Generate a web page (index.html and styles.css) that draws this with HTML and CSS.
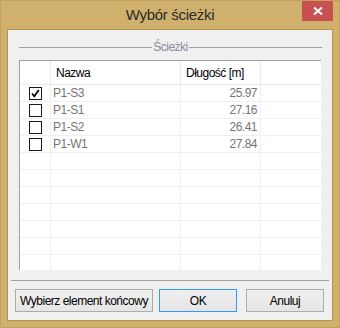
FILE: index.html
```html
<!DOCTYPE html>
<html>
<head>
  <meta charset="utf-8">
  <link rel="stylesheet" href="styles.css">
</head>
<body>
  <div class="window">
    <div class="titlebar">
      <span></span>
      <div class="title">Wybór ścieżki</div>
      <div class="controls">
        <div class="close">
          <svg width="10" height="8" viewBox="0 0 10 8"><path d="M1 0.5 L9 7.5 M9 0.5 L1 7.5" stroke="#fff" stroke-width="2"/></svg>
        </div>
      </div>
    </div>

    <div class="client">
      <div class="group-head">
        <span class="rule"></span>
        <span class="group-label">Ścieżki</span>
        <span class="rule"></span>
      </div>

      <div class="grid">
        <div class="row head">
          <div class="cell"></div>
          <div class="cell">Nazwa</div>
          <div class="cell">Długość [m]</div>
          <div class="cell"></div>
        </div>
        <div class="row">
          <div class="cell"><span class="check checked"><svg width="11" height="11" viewBox="0 0 11 11"><path d="M2 5.5 L4.3 8.3 L8.8 2" fill="none" stroke="#000" stroke-width="1.7"/></svg></span></div>
          <div class="cell name">P1-S3</div>
          <div class="cell num">25.97</div>
          <div class="cell"></div>
        </div>
        <div class="row">
          <div class="cell"><span class="check"></span></div>
          <div class="cell name">P1-S1</div>
          <div class="cell num">27.16</div>
          <div class="cell"></div>
        </div>
        <div class="row">
          <div class="cell"><span class="check"></span></div>
          <div class="cell name">P1-S2</div>
          <div class="cell num">26.41</div>
          <div class="cell"></div>
        </div>
        <div class="row">
          <div class="cell"><span class="check"></span></div>
          <div class="cell name">P1-W1</div>
          <div class="cell num">27.84</div>
          <div class="cell"></div>
        </div>
        <div class="row"><div class="cell"></div><div class="cell"></div><div class="cell"></div><div class="cell"></div></div>
        <div class="row"><div class="cell"></div><div class="cell"></div><div class="cell"></div><div class="cell"></div></div>
        <div class="row"><div class="cell"></div><div class="cell"></div><div class="cell"></div><div class="cell"></div></div>
        <div class="row"><div class="cell"></div><div class="cell"></div><div class="cell"></div><div class="cell"></div></div>
        <div class="row"><div class="cell"></div><div class="cell"></div><div class="cell"></div><div class="cell"></div></div>
        <div class="row"><div class="cell"></div><div class="cell"></div><div class="cell"></div><div class="cell"></div></div>
        <div class="row"><div class="cell"></div><div class="cell"></div><div class="cell"></div><div class="cell"></div></div>
      </div>

      <div class="separator"></div>

      <div class="buttons">
        <button class="btn btn-pick">Wybierz element końcowy</button>
        <button class="btn btn-ok">OK</button>
        <button class="btn btn-cancel">Anuluj</button>
      </div>
    </div>
  </div>
</body>
</html>
```

FILE: styles.css
```css
body {
  margin: 0;
  padding: 0;
  font-family: 'Liberation Sans', Arial, sans-serif;
  font-size: 12px;
  letter-spacing: -0.5px;
}

.window {
  width: 340px;
  height: 328px;
  box-sizing: border-box;
  background: #cfb06c;
  border: 1px solid #c2a25e;
}

.titlebar {
  height: 28px;
  display: grid;
  grid-template-columns: 1fr auto 1fr;
}

.title {
  font-size: 15px;
  line-height: 28px;
  color: #2b2b2b;
  letter-spacing: -0.3px;
}

.controls {
  display: flex;
  justify-content: flex-end;
  padding-right: 6px;
}

.close {
  width: 31px;
  height: 20px;
  background: #c75050;
  display: flex;
  align-items: center;
  justify-content: center;
}

.client {
  margin: 0 6px;
  height: 292px;
  box-sizing: border-box;
  border: 1px solid #b39350;
  background: #f0f0f0;
}

/* group box header */
.group-head {
  display: flex;
  align-items: center;
  height: 17px;
  margin: 9px 10px 0 11px;
}

.rule {
  flex: 1;
  height: 1px;
  background: #a0a0a0;
}

.group-label {
  padding: 0 1px;
  line-height: 17px;
  color: #8a8a98;
}

/* data grid */
.grid {
  width: 302px;
  height: 210px;
  box-sizing: border-box;
  margin: 4px 0 0 11px;
  border-left: 1px solid #a0a0a0;
  border-top: 1px solid #a0a0a0;
  background: #fff;
  overflow: hidden;
}

.row {
  display: grid;
  grid-template-columns: 31px 130px 80px 60px;
  height: 17px;
  box-sizing: border-box;
  border-bottom: 1px solid #f0f0f0;
}

.cell {
  border-right: 1px solid #f0f0f0;
  line-height: 16px;
  white-space: nowrap;
  display: flex;
  align-items: center;
}

.row .cell:last-child {
  border-right: none;
}

.row.head {
  height: 24px;
  border-bottom-color: #e6ebf3;
}

.row.head .cell {
  padding-left: 5px;
  color: #000;
  border-right-color: #e6ebf3;
}

.name {
  padding-left: 2px;
  color: #767676;
}

.num {
  justify-content: flex-end;
  padding-right: 3px;
  color: #767676;
}

.check {
  width: 13px;
  height: 13px;
  box-sizing: border-box;
  margin-left: 9px;
  border: 1px solid #1a1a1a;
  background: #fff;
  display: flex;
  align-items: center;
  justify-content: center;
}

.separator {
  height: 1px;
  margin: 10px 3px 0 3px;
  background: #a0a0a0;
}

.buttons {
  display: flex;
  gap: 6px;
  margin-top: 8px;
  padding-left: 7px;
}

.btn {
  height: 23px;
  box-sizing: border-box;
  padding: 0;
  border: 1px solid #acacac;
  background: linear-gradient(#f0f0f0, #e5e5e5);
  font-family: 'Liberation Sans', Arial, sans-serif;
  font-size: 12px;
  letter-spacing: -0.5px;
  white-space: nowrap;
  color: #000;
}

.btn-pick {
  width: 138px;
}

.btn-ok {
  width: 78px;
  border-color: #3399ff;
}

.btn-cancel {
  width: 78px;
  margin-left: 3px;
}
```
